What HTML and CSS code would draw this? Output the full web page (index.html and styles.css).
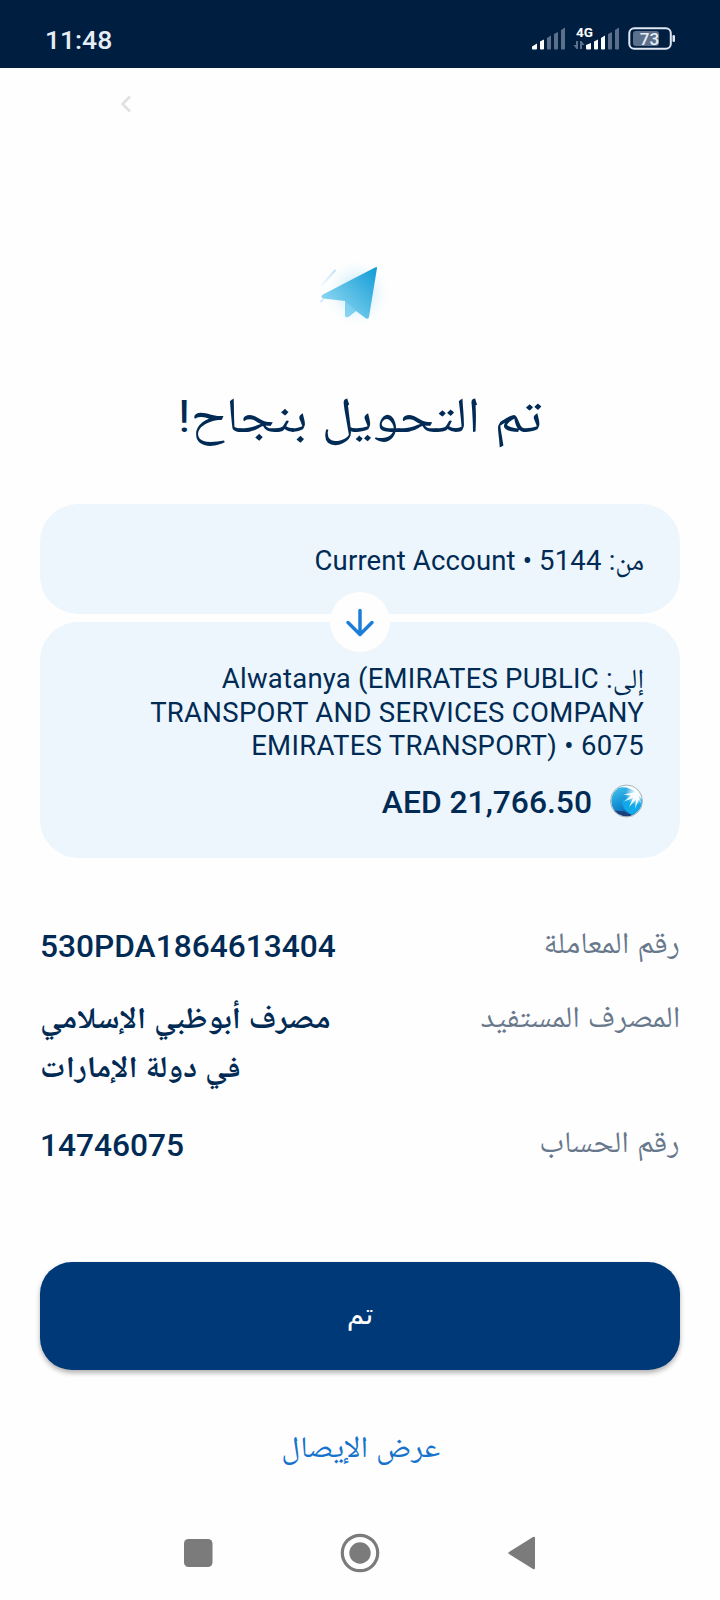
FILE: index.html
```html
<!DOCTYPE html>
<html lang="ar" dir="rtl">
<head>
<meta charset="utf-8">
<title>تم التحويل</title>
<link rel="stylesheet" href="styles.css">
</head>
<body>
<div class="status" dir="ltr">
  <span class="clock">11:48</span>
  <svg class="indicators" width="144" height="30" viewBox="0 0 144 30">
    <g fill="#fff">
      <path d="M0 26.500v-2l5-3v5q0 1-1 1h-3q-1 0-1-1z"/>
      <path d="M8 19.500l4-2v9q0 1-1 1h-2q-1 0-1-1z"/>
      <path d="M42 26l0-3 5-2v5.500q0 1-1 1h-3q-1 0-1-1.500z" transform="translate(12)"/>
      <path d="M62 19.500l4-2v9q0 1-1 1h-2q-1 0-1-1z"/>
      <path d="M69 16l4-2.500v13q0 1-1 1h-2q-1 0-1-1z"/>
    </g>
    <g fill="#5c708b">
      <path d="M15 16l4-2.500v13q0 1-1 1h-2q-1 0-1-1z"/>
      <path d="M22 12l4-2v16.500q0 1-1 1h-2q-1 0-1-1z"/>
      <path d="M29 8l4-2.500v21q0 1-1 1h-2q-1 0-1-1z"/>
      <path d="M76 12l4-2v16.500q0 1-1 1h-2q-1 0-1-1z"/>
      <path d="M83 8l4-2.500v21q0 1-1 1h-2q-1 0-1-1z"/>
      <path d="M46 19v8h-1.500l-3-4h2.500v-4zM48 27v-8h1.500l3 4h-2.500v4z"/>
      <rect x="101" y="9" width="26" height="15" rx="3"/>
    </g>
    <text class="net" x="44" y="14.500">4G</text>
    <rect x="97.300" y="6.200" width="41.500" height="20.500" rx="5" fill="none" stroke="#dfe8f2" stroke-width="2"/>
    <rect x="140.500" y="13" width="2.500" height="7" rx="1.200" fill="#dfe8f2"/>
    <text class="pct" x="117.500" y="23">73</text>
  </svg>
</div>
<header class="top" dir="ltr">
  <svg width="12" height="18" viewBox="0 0 12 18"><path d="M10 1.500L2.500 9l7.500 7.500" fill="none" stroke="#e1e1e1" stroke-width="2.600"/></svg>
</header>
<main class="main">
  <svg class="plane" width="110" height="90" viewBox="0 0 110 90">
    <defs>
      <linearGradient id="wing" x1="1" y1="0" x2="0.100" y2="0.800"><stop offset="0" stop-color="#119bd6"/><stop offset="0.500" stop-color="#4fb9e3"/><stop offset="1" stop-color="#8fd8f3"/></linearGradient>
      <radialGradient id="glow"><stop offset="0.300" stop-color="#c4e9f7" stop-opacity="0.800"/><stop offset="1" stop-color="#fff" stop-opacity="0"/></radialGradient>
      <linearGradient id="trail" x1="1" y1="0" x2="0" y2="1"><stop offset="0" stop-color="#c3e6f7"/><stop offset="1" stop-color="#eff9fe"/></linearGradient>
    </defs>
    <ellipse cx="57" cy="43" rx="35" ry="36" fill="url(#glow)"/>
    <path d="M22 35L35 20.500" stroke="url(#trail)" stroke-width="2.200" stroke-linecap="round"/>
    <path d="M21 51.500l2-2" stroke="#d3edfa" stroke-width="2" stroke-linecap="round"/>
    <path d="M75 17.500q2-1 2 .5L69 67q-.5 2.500-3 1.500L56 61l-7 5.500q-4 2-4-1.500V51L23 48.500q-3-2 0-4z" fill="url(#wing)"/>
    <path d="M45 51l11 10-7 5.500q-4 2-4-1.500z" fill="#8ed7f5" opacity="0.500"/>
  </svg>
  <h1 class="title"><span class="ar">تم التحويل بنجاح<span class="bang">!</span></span></h1>
  <section class="transfer">
    <div class="card from"><p class="acct"><span class="ar">من:</span> <bdi class="name">Current Account • 5144</bdi></p></div>
    <div class="arrow"><svg width="60" height="60" viewBox="0 0 60 60"><path d="M30 18.500v24M18 30.500l12 12 12-12" fill="none" stroke="#1c7ed6" stroke-width="3.500" stroke-linecap="round" stroke-linejoin="round"/></svg></div>
    <div class="card to">
      <p class="acct"><span class="ar">إلى:</span> <bdi class="payee">Alwatanya (EMIRATES PUBLIC</bdi><br><bdi>TRANSPORT AND SERVICES COMPANY</bdi><br><bdi>EMIRATES TRANSPORT) • 6075</bdi></p>
      <div class="amount">
        <svg width="34" height="34" viewBox="0 0 34 34">
          <defs>
            <linearGradient id="ball" x1="0.100" y1="0" x2="0.600" y2="1"><stop offset="0" stop-color="#45c8f0"/><stop offset="0.550" stop-color="#1590d4"/><stop offset="1" stop-color="#0a5fa8"/></linearGradient>
            <radialGradient id="shine"><stop offset="0" stop-color="#fff"/><stop offset="0.400" stop-color="#fff" stop-opacity="0.700"/><stop offset="1" stop-color="#fff" stop-opacity="0"/></radialGradient>
            <clipPath id="disc"><circle cx="16.500" cy="17" r="15.300"/></clipPath>
          </defs>
          <circle cx="16.500" cy="17" r="16" fill="#e9edf0" stroke="#a3abb3" stroke-width="0.900"/>
          <g clip-path="url(#disc)">
            <circle cx="16.500" cy="17" r="15.300" fill="url(#ball)"/>
            <path d="M0 25q8 3 14 2 5 4 12 4l-8 4H4z" fill="#1b3f78"/>
            <path d="M12 17q0 9 10 14 11-5 11-16l-8-8z" fill="#12a9e8"/>
            <path d="M7 4Q18-2 27 5l6 11-4-4-2-3Q17 1 7 4z" fill="#f6fbff"/>
            <circle cx="26" cy="10" r="11" fill="url(#shine)"/>
            <path d="M27 8l-14 2.500 8 1-7 6 9-3.500-4 9 7-7.500-1 9 4-9 3 6z" fill="#fff" opacity="0.900"/>
          </g>
        </svg>
        <bdi>AED 21,766.50</bdi>
      </div>
    </div>
  </section>
  <dl class="details">
    <div class="row"><dt><span class="ar">رقم المعاملة</span></dt><dd dir="ltr">530PDA1864613404</dd></div>
    <div class="row tall"><dt><span class="ar">المصرف المستفيد</span></dt><dd class="bank"><span class="ar">مصرف أبوظبي الإسلامي</span><span class="ar">في دولة الإمارات</span></dd></div>
    <div class="row"><dt><span class="ar">رقم الحساب</span></dt><dd dir="ltr">14746075</dd></div>
  </dl>
  <button class="done"><span class="ar">تم</span></button>
  <a class="receipt"><span class="ar">عرض الإيصال</span></a>
</main>
<nav class="nav" dir="ltr">
  <svg width="400" height="90" viewBox="0 0 400 90" fill="#7b7b7b">
    <rect x="24" y="29" width="28.500" height="28" rx="4.500"/>
    <circle cx="200" cy="43" r="17.700" fill="none" stroke="#7b7b7b" stroke-width="3.200"/><circle cx="200" cy="43" r="10.700"/>
    <path d="M373 27q2-1 2 1v30q0 2-2 1l-24-15q-1.500-1 0-2z"/>
  </svg>
</nav>
</body>
</html>
```
FILE: styles.css
```css
* { box-sizing: border-box; margin: 0; padding: 0; }
body { width: 720px; height: 1600px; background: #fefefe; color: #012b54; font-family: Roboto, "Noto Naskh Arabic", "Noto Sans Arabic", "DejaVu Sans", sans-serif; display: flex; flex-direction: column; overflow: hidden; }
.ar { display: inline-block; white-space: nowrap; letter-spacing: 0; }
.status { height: 68px; background: #001e40; color: #e6edf5; display: flex; justify-content: space-between; align-items: center; padding: 10px 44px 0 45px; }
.clock { font-size: 26.500px; font-weight: 500; }
.indicators { display: block; margin-top: -4px; }
.net { font: 700 13.500px Roboto, sans-serif; fill: #fff; }
.pct { font: 500 17px Roboto, sans-serif; fill: #e6edf5; text-anchor: middle; }
.top { height: 182px; padding: 27px 0 0 120px; }
.main { display: flex; flex-direction: column; height: 1260px; }
.plane { display: block; margin-right: 310px; }
.title { height: 100px; margin: 25px 0 39px; text-align: center; font-size: 50px; font-weight: 400; line-height: 100px; }
.title .ar { transform: scaleX(1.105); }
.title .bang { font-size: 45px; }
.transfer { padding: 0 40px; display: flex; flex-direction: column; gap: 8px; position: relative; }
.card { background: #edf6fc; border-radius: 38px; padding: 0 36px; }
.from { height: 110px; padding-top: 40px; }
.to { height: 236px; padding-top: 40px; }
.acct { font-size: 27.500px; line-height: 33.500px; letter-spacing: .3px; }
.acct .name { letter-spacing: .16px; }
.acct .payee { letter-spacing: .22px; }
.arrow { position: absolute; left: 330px; top: 88px; width: 60px; height: 60px; border-radius: 50%; background: #fefefe; }
.arrow svg { display: block; }
.amount { display: flex; align-items: center; gap: 18px; margin-top: 19px; height: 38px; font-size: 31.800px; font-weight: 500; }
.amount bdi { padding-top: 2px; }
.details { padding: 0 40px; margin-top: 63px; height: 341px; }
.row { display: flex; justify-content: space-between; height: 74px; line-height: 49px; }
.row.tall { height: 125px; }
.row dt { color: #68788c; font-size: 30px; margin-top: -3px; }
.row dt .ar { transform: scaleX(1.067); transform-origin: right; }
.row dd { font-size: 31.700px; font-weight: 500; padding-top: 1px; }
.row .bank { display: flex; flex-direction: column; font-size: 30px; font-weight: 700; align-items: flex-end; margin-top: -3px; }
.row .bank .ar { transform: scaleX(1.064); transform-origin: left; }
.done { height: 108px; margin: 0 40px; border: 0; border-radius: 32px; background: #003977; color: #fff; font: 28px Roboto, "DejaVu Sans", sans-serif; box-shadow: 0 3px 5px rgba(0,0,0,.3); }
.done .ar { transform: translateY(-2px); }
.receipt { margin-top: 49px; height: 56px; line-height: 56px; text-align: center; color: #1673cc; font-size: 30px; }
.receipt .ar { transform: translateX(1px) scaleX(1.063); }
.nav { height: 90px; display: flex; justify-content: center; }
```
